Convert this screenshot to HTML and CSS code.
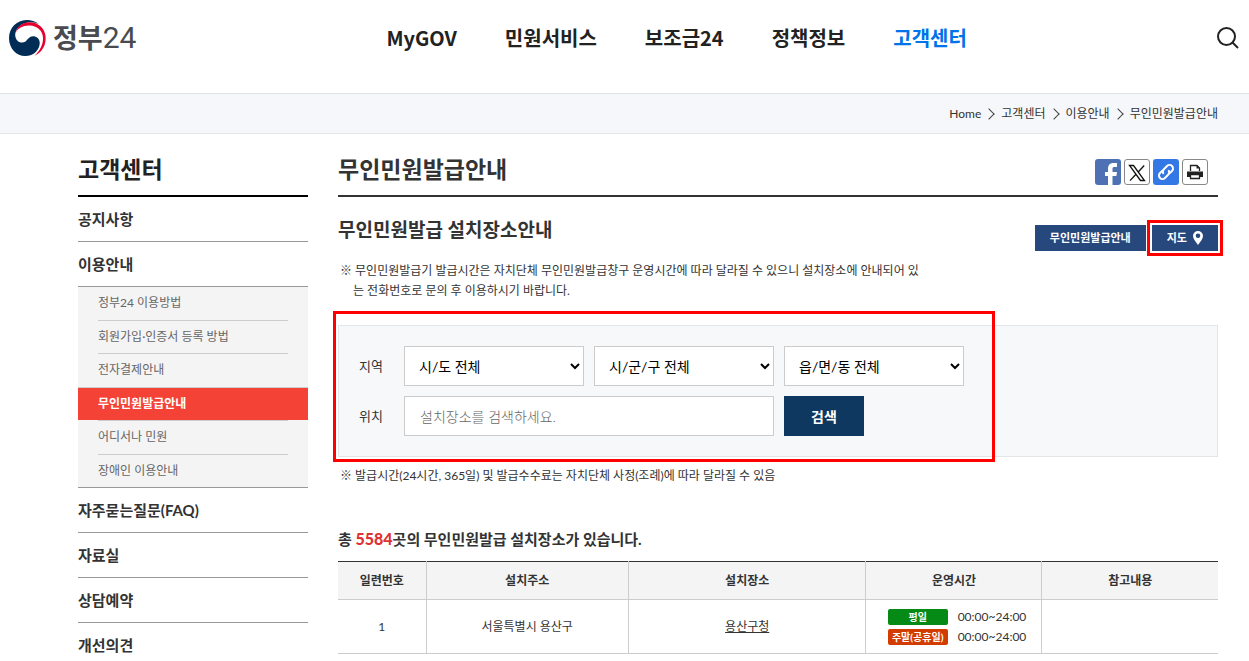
FILE: index.html
```html
<!DOCTYPE html>
<html lang="ko">
<head>
<meta charset="UTF-8">
<meta name="viewport" content="width=device-width, initial-scale=1.0">
<title>무인민원발급안내 | 정부24</title>
<link rel="stylesheet" href="styles.css">
</head>
<body>
<header class="header">
    <a href="#" class="logo">
        <svg class="logo_mark" viewBox="27 59 112 109" aria-hidden="true">
            <path fill="#002c55" d="M118 72C106 62 95 59 80 59C50 60 27 83 27 114C27 145 50 168 76 168C102 168 121 148 120 126C119 115 110 108 100 108C88 108 84 118 77 124C68 131 50 128 46 108C44 92 56 72 80 67C95 64 108 66 118 72Z"/>
            <path fill="#e6002d" d="M48 97C52 78 66 68 86 66C112 64 138 82 138 114C138 140 124 158 104 167C120 153 130 135 130 114C130 90 108 74 86 76C68 77 54 84 48 97Z"/>
        </svg>
        <span class="logo_text">정부<span class="logo_num">24</span></span>
    </a>
    <nav class="gnb">
        <ul>
            <li><a href="#">MyGOV</a></li>
            <li><a href="#">민원서비스</a></li>
            <li><a href="#">보조금24</a></li>
            <li><a href="#">정책정보</a></li>
            <li><a href="#" class="on">고객센터</a></li>
        </ul>
    </nav>
    <button type="button" class="btn_search" aria-label="검색">
        <svg viewBox="0 0 22 22" aria-hidden="true"><circle cx="9.5" cy="9.5" r="8.5"/><path d="M15.5 15.5L21 21"/></svg>
    </button>
</header>

<div class="location">
    <ol>
        <li><a href="#">Home</a></li>
        <li><a href="#">고객센터</a></li>
        <li><a href="#">이용안내</a></li>
        <li><a href="#">무인민원발급안내</a></li>
    </ol>
</div>

<div class="container">
    <aside class="side">
        <h2 class="side_title">고객센터</h2>
        <ul class="lnb">
            <li><a href="#">공지사항</a></li>
            <li>
                <a href="#">이용안내</a>
                <ul class="lnb_sub">
                    <li><a href="#">정부24 이용방법</a></li>
                    <li><a href="#">회원가입·인증서 등록 방법</a></li>
                    <li><a href="#">전자결제안내</a></li>
                    <li class="on"><a href="#">무인민원발급안내</a></li>
                    <li><a href="#">어디서나 민원</a></li>
                    <li><a href="#">장애인 이용안내</a></li>
                </ul>
            </li>
            <li><a href="#">자주묻는질문(FAQ)</a></li>
            <li><a href="#">자료실</a></li>
            <li><a href="#">상담예약</a></li>
            <li><a href="#">개선의견</a></li>
        </ul>
    </aside>

    <main class="content">
        <div class="title_wrap">
            <h1>무인민원발급안내</h1>
            <div class="sns">
                <a href="#" class="facebook" aria-label="페이스북">
                    <svg viewBox="0 0 26 26"><path fill="#fff" d="M13 26V17h-3v-4h3v-3C13 6 15 4 18.500 4H22v4h-2.500C18 8 17.500 8.600 17.500 10v3H22l-.6 4h-3.900v9z"/></svg>
                </a>
                <a href="#" class="line" aria-label="X">
                    <svg viewBox="0 0 24 24"><path fill="none" stroke="#111" stroke-width="1.300" d="M4.500 5.500h4l11 15h-4zM19.200 5.500L13 12.200M11 14.200L5 20.600"/></svg>
                </a>
                <a href="#" class="link" aria-label="주소 복사">
                    <svg viewBox="0 0 26 26"><g fill="none" stroke="#fff" stroke-width="2" stroke-linecap="round" transform="rotate(-45 13 13)"><path d="M11.500 9.500H8a3.500 3.500 0 0 0 0 7h4.500a3.500 3.500 0 0 0 3.300-2.400"/><path d="M14.500 16.500H18a3.500 3.500 0 0 0 0-7h-4.500a3.500 3.500 0 0 0-3.300 2.400"/></g></svg>
                </a>
                <button type="button" class="line" aria-label="인쇄">
                    <svg viewBox="0 0 24 24"><path fill="#fff" stroke="#222" stroke-width="1.300" d="M7.500 11V5.500h6.500l2.500 2.500v3"/><path fill="#222" d="M13.500 5v3.500H17zM4 11.500h16V17H4z"/><path fill="#fff" stroke="#222" stroke-width="1.300" d="M7.500 14.500h9v4h-9z"/></svg>
                </button>
            </div>
        </div>

        <div class="sub_wrap">
            <h2>무인민원발급 설치장소안내</h2>
            <div class="btns">
                <a href="#" class="btn">무인민원발급안내</a>
                <a href="#" class="btn btn_map">지도
                    <svg viewBox="0 0 10 14" aria-hidden="true"><path fill="#fff" fill-rule="evenodd" d="M5 0a5 5 0 0 1 5 5c0 3-3 6-5 9C3 11 0 8 0 5a5 5 0 0 1 5-5zm0 2.500a2.300 2.300 0 1 0 0 4.600 2.300 2.300 0 0 0 0-4.600z"/></svg>
                </a>
            </div>
        </div>

        <p class="note">※ 무인민원발급기 발급시간은 자치단체 무인민원발급창구 운영시간에 따라 달라질 수 있으니 설치장소에 안내되어 있는 전화번호로 문의 후 이용하시기 바랍니다.</p>

        <form class="search">
            <div class="row">
                <label for="sido">지역</label>
                <select id="sido"><option>시/도 전체</option></select>
                <select aria-label="시/군/구"><option>시/군/구 전체</option></select>
                <select aria-label="읍/면/동"><option>읍/면/동 전체</option></select>
            </div>
            <div class="row">
                <label for="place">위치</label>
                <input type="text" id="place" placeholder="설치장소를 검색하세요.">
                <button type="submit">검색</button>
            </div>
        </form>
        <p class="note">※ 발급시간(24시간, 365일) 및 발급수수료는 자치단체 사정(조례)에 따라 달라질 수 있음</p>

        <p class="total">총 <strong>5584</strong>곳의 무인민원발급 설치장소가 있습니다.</p>
        <table class="list">
            <colgroup>
                <col class="c_no"><col class="c_addr"><col class="c_place"><col class="c_time"><col class="c_memo">
            </colgroup>
            <thead>
                <tr>
                    <th scope="col">일련번호</th>
                    <th scope="col">설치주소</th>
                    <th scope="col">설치장소</th>
                    <th scope="col">운영시간</th>
                    <th scope="col">참고내용</th>
                </tr>
            </thead>
            <tbody>
                <tr>
                    <td>1</td>
                    <td>서울특별시 용산구</td>
                    <td><a href="#">용산구청</a></td>
                    <td>
                        <div class="time"><span class="badge">평일</span>00:00~24:00</div>
                        <div class="time"><span class="badge holiday">주말(공휴일)</span>00:00~24:00</div>
                    </td>
                    <td></td>
                </tr>
            </tbody>
        </table>
    </main>
</div>
</body>
</html>
```
FILE: styles.css
```css
* {margin: 0; padding: 0; box-sizing: border-box;}
ul, ol {list-style: none;}
a {color: inherit; text-decoration: none;}
button {border: 0; background: none; cursor: pointer;}
svg {display: block;}
body, input, select, button {
    font-family: Lato, "Noto Sans CJK KR", sans-serif;
}
body {
    background: #fff;
    color: #333;
    font-size: 12px;
    line-height: 20px;
}

/* header */
.header {
    display: flex;
    align-items: center;
    height: 93px;
    padding: 0 10px 18px 9px;
}
.logo {
    display: flex;
    align-items: center;
    gap: 7px;
}
.logo_mark {
    width: 37px;
    height: 36px;
}
.logo_text {
    color: #4a4b50;
    font-size: 27px;
    font-weight: 700;
    line-height: 36px;
}
.logo_num {
    font-family: Roboto, sans-serif;
    font-size: 30px;
    font-weight: 400;
}
.gnb {
    margin-left: 250px;
}
.gnb ul {
    display: flex;
    gap: 48px;
    font-family: "Noto Sans CJK KR", sans-serif;
    font-size: 20px;
    font-weight: 700;
    line-height: 30px;
    color: #222;
}
.gnb .on {
    color: #0073e9;
}
.btn_search {
    margin-left: auto;
}
.btn_search svg {
    width: 22px;
    height: 22px;
    fill: none;
    stroke: #222;
    stroke-width: 2;
}

/* location */
.location {
    padding: 10px 31px 9px;
    border-top: 1px solid #dfe3e8;
    border-bottom: 1px solid #e5e8eb;
    background: #f5f7fa;
}
.location ol {
    display: flex;
    justify-content: flex-end;
}
.location li {
    display: flex;
    align-items: center;
}
.location li + li::before {
    content: "";
    width: 7px;
    height: 7px;
    margin: 0 8px 0 4px;
    border: solid #444;
    border-width: 1px 1px 0 0;
    transform: rotate(45deg);
}

/* layout */
.container {
    display: flex;
    gap: 30px;
    padding: 20px 31px 0 78px;
}
.side {
    flex: 0 0 230px;
}
.content {
    flex: 1;
    min-width: 0;
}

/* side menu */
.side_title {
    height: 43px;
    border-bottom: 2px solid #000;
    color: #222;
    font-size: 23px;
    line-height: 30px;
}
.lnb > li > a {
    display: block;
    border-bottom: 1px solid #999;
    font-size: 15px;
    font-weight: 700;
    line-height: 44px;
}
.lnb_sub {
    display: flex;
    flex-direction: column;
    height: 201px;
    border-bottom: 1px solid #999;
    background: #f4f4f4;
    color: #666;
}
.lnb_sub li {
    flex: 1;
    display: flex;
    align-items: center;
    margin: 0 20px;
    border-top: 1px solid #ccc;
}
.lnb_sub li:first-child {
    border-top: 0;
}
.lnb_sub .on {
    margin: 0;
    padding: 0 20px;
    background: #f44336;
    background-clip: padding-box;
    color: #fff;
    font-weight: 700;
}

/* title */
.title_wrap {
    display: flex;
    justify-content: space-between;
    height: 43px;
    padding-right: 10px;
    border-bottom: 2px solid #333;
}
.title_wrap h1 {
    font-size: 23px;
    line-height: 30px;
}
.sns {
    display: flex;
    gap: 3px;
    padding-top: 5px;
}
.sns > * {
    width: 26px;
    height: 26px;
    border-radius: 3px;
}
.sns .facebook {
    background: #4e71b4;
}
.sns .line {
    border: 1px solid #888;
    background: #fff;
}
.sns .link {
    background: #3478e5;
}
.sub_wrap {
    display: flex;
    justify-content: space-between;
    align-items: flex-start;
    padding-top: 18px;
}
.sub_wrap h2 {
    font-size: 19px;
    line-height: 30px;
}
.btns {
    display: flex;
    gap: 6px;
    padding-top: 10px;
}
.btn {
    display: flex;
    align-items: center;
    gap: 6px;
    height: 26px;
    padding: 0 15px;
    background: #27487d;
    color: #fff;
    font-size: 11px;
    font-weight: 700;
}
.btn svg {
    width: 10px;
    height: 14px;
}
.btn_map {
    position: relative;
}
.btn_map::after {
    content: "";
    position: absolute;
    inset: -5px;
    border: 3px solid #f00;
}
.note {
    max-width: 585px;
    padding-left: 15px;
    text-indent: -13px;
}

/* search */
.search {
    position: relative;
    display: flex;
    flex-direction: column;
    gap: 10px;
    margin: 24px 0 9px;
    padding: 20px;
    border: 1px solid #e3e6e9;
    background: #f7f8fa;
}
/* red guide line */
.search::after {
    content: "";
    position: absolute;
    top: -15px;
    bottom: -6px;
    left: -6px;
    width: 656px;
    border: 3px solid #f00;
    pointer-events: none;
}
.sub_wrap + .note {
    margin-top: 10px;
}
.search .row {
    display: flex;
    align-items: center;
    gap: 10px;
}
.search label {
    width: 35px;
    font-size: 13px;
}
.search select,
.search input {
    height: 40px;
    border: 1px solid #ccc;
    background: #fff;
    color: #000;
    font-size: 14px;
}
.search select {
    width: 180px;
    padding-left: 10px;
}
.search input {
    width: 370px;
    padding: 0 15px;
}
.search input::placeholder {
    color: #666;
    font-weight: 300;
}
.search button {
    width: 80px;
    height: 40px;
    background: #0e3860;
    color: #fff;
    font-size: 14px;
    font-weight: 700;
}

/* list */
.total {
    margin: 41px 0 10px;
    font-size: 15px;
    font-weight: 700;
    line-height: 24px;
}
.total strong {
    color: #dd3333;
    font-size: 16px;
}
.list {
    width: 100%;
    border-collapse: collapse;
    border-top: 1px solid #333;
    table-layout: fixed;
    text-align: center;
}
.c_no {width: 10%;}
.c_addr {width: 23%;}
.c_place {width: 27%;}
.c_time, .c_memo {width: 20%;}
.list th,
.list td {
    border-bottom: 1px solid #ccc;
    border-left: 1px solid #ccc;
}
.list th:first-child,
.list td:first-child {
    border-left: 0;
}
.list th {
    height: 38px;
    background: #f4f4f4;
}
.list td {
    height: 54px;
}
.list td a {
    text-decoration: underline;
}
.time {
    display: flex;
    justify-content: center;
    align-items: center;
    gap: 10px;
    padding-left: 6px;
}
.badge {
    width: 60px;
    border-radius: 2px;
    background: #058a15;
    color: #fff;
    font-size: 10px;
    font-weight: 700;
    line-height: 16px;
}
.badge.holiday {
    background: #d23c00;
}
```
